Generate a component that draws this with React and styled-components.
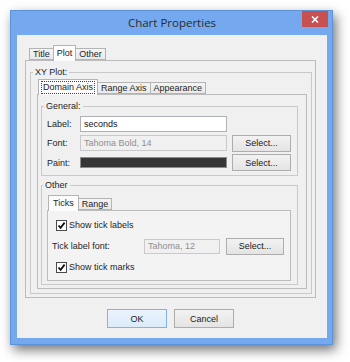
import React from 'react';
import styled, { createGlobalStyle } from 'styled-components';

const GlobalStyle = createGlobalStyle`
  html, body {
    margin: 0;
    padding: 0;
    background: #ffffff;
  }
  body {
    font-family: "Liberation Sans", Arial, sans-serif;
    font-size: 9px;
    color: #1e1e1e;
  }
  * {
    box-sizing: border-box;
  }
`;

const Page = styled.div`
  width: 350px;
  height: 362px;
  padding: 10px 0 0 10px;
`;

const Window = styled.div`
  width: 323px;
  height: 335px;
  display: flex;
  flex-direction: column;
  padding: 0 5px 6px 6px;
  background: #74a9ef;
  border: 1px solid #5e92d6;
  box-shadow: 3px 5px 11px rgba(0, 0, 0, 0.55);
`;

const TitleBar = styled.div`
  height: 24px;
  display: grid;
  grid-template-columns: 1fr auto 1fr;
  align-items: center;
`;

const TitleText = styled.div`
  grid-column: 2;
  padding-bottom: 2px;
  font-family: "Open Sans", "Noto Sans", sans-serif;
  font-size: 11.5px;
  color: #2b2b2b;
`;

const CloseButton = styled.div`
  grid-column: 3;
  justify-self: end;
  align-self: start;
  width: 26px;
  height: 16px;
  margin-right: -1px;
  display: flex;
  align-items: center;
  justify-content: center;
  background: #c75050;
`;

const Content = styled.div`
  flex: 1;
  display: flex;
  flex-direction: column;
  padding: 10px 11px 0 8px;
  background: #f0f0f0;
`;

const TabPane = styled.div`
  display: flex;
  flex-direction: column;
  flex: ${(p) => (p.$grow ? 1 : 'none')};
`;

const TabStrip = styled.div`
  height: 15px;
  display: flex;
  align-items: flex-end;
  padding-left: ${(p) => p.$inset || 4}px;
`;

const Tab = styled.div`
  position: relative;
  z-index: ${(p) => (p.$active ? 1 : 0)};
  height: ${(p) => (p.$active ? 16 : 12)}px;
  margin-bottom: ${(p) => (p.$active ? -1 : 0)}px;
  margin-left: -1px;
  padding: 0 ${(p) => p.$pad || 3}px;
  display: flex;
  align-items: center;
  border: 1px solid #b4b4b4;
  border-bottom: ${(p) => (p.$active ? 'none' : '1px solid #b4b4b4')};
  background: ${(p) => (p.$active ? '#fcfcfc' : 'linear-gradient(#f4f4f4, #e9e9e9)')};
  white-space: nowrap;
  line-height: 11px;
`;

const Focus = styled.span`
  padding: 0 1px;
  border: 1px dotted #444;
`;

const Panel = styled.div`
  flex: ${(p) => (p.$grow ? 1 : 'none')};
  display: flex;
  flex-direction: column;
  gap: ${(p) => p.$gap || 0}px;
  padding: ${(p) => p.$pad};
  border: 1px solid #bcbcbc;
  background: ${(p) => p.$bg || '#f0f0f0'};
`;

const Group = styled.fieldset`
  margin: 0;
  min-width: 0;
  flex: ${(p) => (p.$grow ? 1 : 'none')};
  display: flex;
  flex-direction: column;
  padding: ${(p) => `${p.$pt}px ${p.$pr}px ${p.$pb}px ${p.$pl}px`};
  border: 1px solid #c9c9c9;

  & > legend {
    margin-left: ${(p) => (p.$indent ?? 2) - p.$pl}px;
  }
`;

const Legend = styled.legend`
  padding: 0 2px;
  line-height: 11px;
`;

const FormGrid = styled.div`
  display: grid;
  grid-template-columns: ${(p) => p.$cols};
  grid-auto-rows: ${(p) => p.$row}px;
  column-gap: ${(p) => p.$gap}px;
  row-gap: ${(p) => p.$rowGap || 0}px;
  align-items: center;
`;

const FieldLabel = styled.span`
  white-space: nowrap;
`;

const TextField = styled.div`
  height: ${(p) => p.$h || 16}px;
  padding: 0 3px;
  display: flex;
  align-items: center;
  border: 1px solid ${(p) => (p.$disabled ? '#c9c9c9' : '#aeb1b6')};
  background: ${(p) => (p.$disabled ? '#f0f0f0' : '#ffffff')};
  color: ${(p) => (p.$disabled ? '#8f8f8f' : '#111')};
  white-space: nowrap;
`;

const ColorBar = styled.div`
  height: 11px;
  border: 1px solid #8c8c8c;
  background: ${(p) => p.$color};
`;

const Button = styled.div`
  height: ${(p) => p.$h || 17}px;
  width: ${(p) => (p.$w ? `${p.$w}px` : 'auto')};
  display: flex;
  align-items: center;
  justify-content: center;
  border: 1px solid ${(p) => (p.$primary ? '#7fb4e8' : '#adadad')};
  background: ${(p) =>
    p.$primary ? 'linear-gradient(#eaf3fc, #dcebfa)' : 'linear-gradient(#f2f2f2, #e4e4e4)'};
  color: #1a1a1a;
`;

const CheckRow = styled.div`
  grid-column: 1 / -1;
  display: flex;
  align-items: center;
  gap: 2px;
  padding-left: 4px;
`;

const CheckBox = styled.span`
  width: 11px;
  height: 11px;
  display: flex;
  align-items: center;
  justify-content: center;
  border: 1px solid #4a4a4a;
  background: #ffffff;
`;

const Footer = styled.div`
  height: 40px;
  display: flex;
  justify-content: center;
  gap: 7px;
  padding-top: 11px;
`;

const Check = () => (
  <CheckBox>
    <svg width="9" height="9" viewBox="0 0 9 9">
      <path d="M1.5 4.5 L3.6 6.8 L7.6 1.6" fill="none" stroke="#111" strokeWidth="1.8" />
    </svg>
  </CheckBox>
);

const App = () => {
  return (
    <Page>
      <GlobalStyle />
      <Window>
        <TitleBar>
          <TitleText>Chart Properties</TitleText>
          <CloseButton>
            <svg width="8" height="7" viewBox="0 0 8 7">
              <path d="M1 0.5 L7 6.5 M7 0.5 L1 6.5" stroke="#ffffff" strokeWidth="1.6" />
            </svg>
          </CloseButton>
        </TitleBar>
        <Content>
          <TabPane $grow>
            <TabStrip $inset={5}>
              <Tab $pad={3}>Title</Tab>
              <Tab $active $pad={3}>Plot</Tab>
              <Tab $pad={3}>Other</Tab>
            </TabStrip>
            <Panel $grow $pad="6px 3px 3px 4px">
              <Group $grow $pt={1} $pr={4} $pb={4} $pl={6} $indent={2}>
                <Legend>XY Plot:</Legend>
                <TabPane $grow>
                  <TabStrip $inset={2}>
                    <Tab $active $pad={2}>
                      <Focus>Domain Axis</Focus>
                    </Tab>
                    <Tab $pad={3}>Range Axis</Tab>
                    <Tab $pad={3}>Appearance</Tab>
                  </TabStrip>
                  <Panel $grow $gap={4} $pad="6px 8px 3px 3px">
                    <Group $pt={2} $pr={5} $pb={3} $pl={5} $indent={2}>
                      <Legend>General:</Legend>
                      <FormGrid $cols="28px 147px 59px" $row={19} $rowGap={0.5} $gap={5}>
                        <FieldLabel>Label:</FieldLabel>
                        <TextField>seconds</TextField>
                        <span />
                        <FieldLabel>Font:</FieldLabel>
                        <TextField $disabled>Tahoma Bold, 14</TextField>
                        <Button>Select...</Button>
                        <FieldLabel>Paint:</FieldLabel>
                        <ColorBar $color="#363636" />
                        <Button>Select...</Button>
                      </FormGrid>
                    </Group>
                    <Group $grow $pt={4} $pr={6} $pb={3} $pl={5} $indent={1}>
                      <Legend>Other</Legend>
                      <TabPane $grow>
                        <TabStrip $inset={2}>
                          <Tab $active $pad={4}>Ticks</Tab>
                          <Tab $pad={3}>Range</Tab>
                        </TabStrip>
                        <Panel $grow $pad="4px 4px 0" $bg="#f3f3f3">
                          <FormGrid $cols="86px 76px 58px" $row={20} $rowGap={1} $gap={6}>
                            <CheckRow>
                              <Check />
                              <span>Show tick labels</span>
                            </CheckRow>
                            <FieldLabel>Tick label font:</FieldLabel>
                            <TextField $disabled $h={15}>Tahoma, 12</TextField>
                            <Button>Select...</Button>
                            <CheckRow>
                              <Check />
                              <span>Show tick marks</span>
                            </CheckRow>
                          </FormGrid>
                        </Panel>
                      </TabPane>
                    </Group>
                  </Panel>
                </TabPane>
              </Group>
            </Panel>
          </TabPane>
          <Footer>
            <Button $primary $w={60} $h={19}>OK</Button>
            <Button $w={60} $h={19}>Cancel</Button>
          </Footer>
        </Content>
      </Window>
    </Page>
  );
};

export default App;
